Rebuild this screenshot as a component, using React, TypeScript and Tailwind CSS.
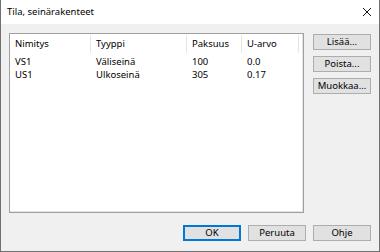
const cols = [
  { title: 'Nimitys', w: 'w-[81px]' },
  { title: 'Tyyppi', w: 'w-[96px]' },
  { title: 'Paksuus', w: 'w-[55px]' },
  { title: 'U-arvo', w: 'w-[57px]' },
]

const rows = [
  ['VS1', 'Väliseinä', '100', '0.0'],
  ['US1', 'Ulkoseinä', '305', '0.17'],
]

const widths = ['w-[81px]', 'w-[96px]', 'w-[55px]', 'w-[57px]']

function Btn({ label, primary }: { label: string; primary?: boolean }) {
  return (
    <div
      className={
        'w-[58px] h-[16px] flex items-center justify-center bg-[#e1e1e1] text-[9.5px] leading-none text-black ' +
        (primary ? 'border-2 border-[#0078d7]' : 'border border-[#adadad]')
      }
    >
      {label}
    </div>
  )
}

export default function App() {
  return (
    <div
      className="w-[380px] h-[252px] flex flex-col bg-[#f0f0f0] border-x border-b border-[#707070] select-none"
      style={{ fontFamily: '"Noto Sans", "Open Sans", sans-serif' }}
    >
      {/* Title bar */}
      <div className="h-[24px] bg-white flex items-center justify-between pl-[6px] pr-[7px]">
        <span className="text-[9.5px] text-black leading-none">Tila, seinärakenteet</span>
        <svg width="10" height="10" viewBox="0 0 10 10">
          <path d="M1 1 L9 9 M9 1 L1 9" stroke="#111" strokeWidth="1" />
        </svg>
      </div>

      {/* Body */}
      <div className="flex-1 flex flex-col pt-[9px] px-[8px] pb-[10px]">
        <div className="flex gap-[9px]">
          {/* List view */}
          <div className="flex-1 h-[180px] bg-white border border-[#a0a0a0] shadow-[inset_-1px_-1px_0_#e3e3e3]">
            <div className="flex h-[20px]">
              {cols.map(c => (
                <div key={c.title} className={`${c.w} flex items-center pl-[5px] border-r border-[#e5e5e5] my-[1px] text-[9.5px] text-black leading-none`}>
                  {c.title}
                </div>
              ))}
            </div>
            <div className="pt-[1px]">
              {rows.map(r => (
                <div key={r[0]} className="flex h-[13px]">
                  {r.map((cell, i) => (
                    <div key={i} className={`${widths[i]} flex items-center pl-[5px] text-[9.5px] text-black leading-none`}>
                      {cell}
                    </div>
                  ))}
                </div>
              ))}
            </div>
          </div>

          {/* Side buttons */}
          <div className="flex flex-col gap-[6px] mt-[1px]">
            <Btn label="Lisää..." />
            <Btn label="Poista..." />
            <Btn label="Muokkaa..." />
          </div>
        </div>

        {/* Bottom buttons */}
        <div className="flex justify-end gap-[7px] mt-[12px]">
          <Btn label="OK" primary />
          <Btn label="Peruuta" />
          <Btn label="Ohje" />
        </div>
      </div>
    </div>
  )
}
